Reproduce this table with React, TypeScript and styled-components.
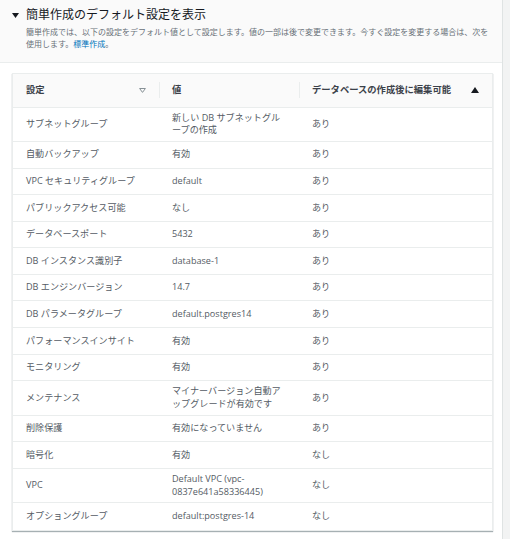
import React from "react";
import styled, { createGlobalStyle } from "styled-components";

const GlobalStyle = createGlobalStyle`
  html, body {
    margin: 0;
    padding: 0;
    background: #f2f3f3;
  }
  body {
    font-family: "Open Sans", "Noto Sans CJK JP", sans-serif;
    -webkit-font-smoothing: antialiased;
  }
  * { box-sizing: border-box; }
`;

const Panel = styled.div`
  width: 503px;
  min-height: 539px;
  background: #ffffff;
  border-right: 1px solid #dfe3e3;
`;

const Header = styled.header`
  background: #fafafa;
  border-bottom: 1px solid #eaeded;
  padding: 7px 8px 12px 12px;
`;

const TitleRow = styled.div`
  display: flex;
  align-items: center;
  gap: 7px;
`;

const Title = styled.h2`
  margin: 0;
  font-size: 12px;
  line-height: 16px;
  font-weight: 400;
  color: #16191f;
`;

const Description = styled.p`
  margin: 3px 0 0 14px;
  font-size: 8px;
  line-height: 12px;
  color: #687078;
`;

const Link = styled.a`
  color: #0073bb;
  text-decoration: none;
`;

const Body = styled.section`
  padding: 10px 9px 0 12px;
`;

const Table = styled.div`
  border: 1px solid #eaeded;
  box-shadow: 0 1px 1px 0 rgba(0, 28, 36, 0.35);
  background: #ffffff;
`;

const Row = styled.div<{ $head?: boolean }>`
  display: grid;
  grid-template-columns: 146px 140px 1fr;
  align-items: center;
  min-height: ${(p) => (p.$head ? "33.5px" : "26.6px")};
  background: ${(p) => (p.$head ? "#fafafa" : "#ffffff")};
  border-bottom: 1px solid #eaeded;
  &:last-child {
    border-bottom: none;
  }
`;

const HeadCell = styled.div<{ $divider?: boolean }>`
  display: flex;
  align-items: center;
  justify-content: space-between;
  height: 16px;
  padding: 0 13px 0 ${(p) => (p.$divider ? "12px" : "13px")};
  border-left: ${(p) => (p.$divider ? "1px solid #eaeded" : "none")};
  font-size: 9.3px;
  line-height: 16px;
  font-weight: 700;
  color: #3b4149;
  white-space: nowrap;
`;

const Cell = styled.div`
  padding: 4px 13px;
  font-size: 9.1px;
  line-height: 12.7px;
  color: #545b64;
  word-break: normal;
  overflow-wrap: anywhere;
`;

const Caret = () => (
  <svg width="7" height="5" viewBox="0 0 7 5" aria-hidden="true">
    <path d="M0 0 H7 L3.5 5 Z" fill="#16191f" />
  </svg>
);

const SortNone = () => (
  <svg width="7" height="5" viewBox="0 0 7 5" aria-hidden="true">
    <path d="M0.6 0.5 H6.4 L3.5 4.4 Z" fill="none" stroke="#879196" strokeWidth="1" />
  </svg>
);

const SortAsc = () => (
  <svg width="8" height="6" viewBox="0 0 8 6" aria-hidden="true">
    <path d="M0 6 H8 L4 0 Z" fill="#16191f" />
  </svg>
);

const rows: [string, string, string][] = [
  ["サブネットグループ", "新しい DB サブネットグループの作成", "あり"],
  ["自動バックアップ", "有効", "あり"],
  ["VPC セキュリティグループ", "default", "あり"],
  ["パブリックアクセス可能", "なし", "あり"],
  ["データベースポート", "5432", "あり"],
  ["DB インスタンス識別子", "database-1", "あり"],
  ["DB エンジンバージョン", "14.7", "あり"],
  ["DB パラメータグループ", "default.postgres14", "あり"],
  ["パフォーマンスインサイト", "有効", "あり"],
  ["モニタリング", "有効", "あり"],
  ["メンテナンス", "マイナーバージョン自動アップグレードが有効です", "あり"],
  ["削除保護", "有効になっていません", "あり"],
  ["暗号化", "有効", "なし"],
  ["VPC", "Default VPC (vpc-0837e641a58336445)", "なし"],
  ["オプショングループ", "default:postgres-14", "なし"],
];

export default function App() {
  return (
    <>
      <GlobalStyle />
      <Panel>
        <Header>
          <TitleRow>
            <Caret />
            <Title>簡単作成のデフォルト設定を表示</Title>
          </TitleRow>
          <Description>
            <span>簡単作成では、以下の設定をデフォルト値として設定します。値の一部は後で変更できます。今すぐ設定を変更する場合は、次を</span>
            <span>使用します。</span>
            <Link href="#">標準作成</Link>
            <span>。</span>
          </Description>
        </Header>
        <Body>
          <Table>
            <Row $head>
              <HeadCell>
                <span>設定</span>
                <SortNone />
              </HeadCell>
              <HeadCell $divider>
                <span>値</span>
              </HeadCell>
              <HeadCell $divider>
                <span>データベースの作成後に編集可能</span>
                <SortAsc />
              </HeadCell>
            </Row>
            {rows.map(([k, v, e]) => (
              <Row key={k}>
                <Cell>{k}</Cell>
                <Cell>{v}</Cell>
                <Cell>{e}</Cell>
              </Row>
            ))}
          </Table>
        </Body>
      </Panel>
    </>
  );
}
